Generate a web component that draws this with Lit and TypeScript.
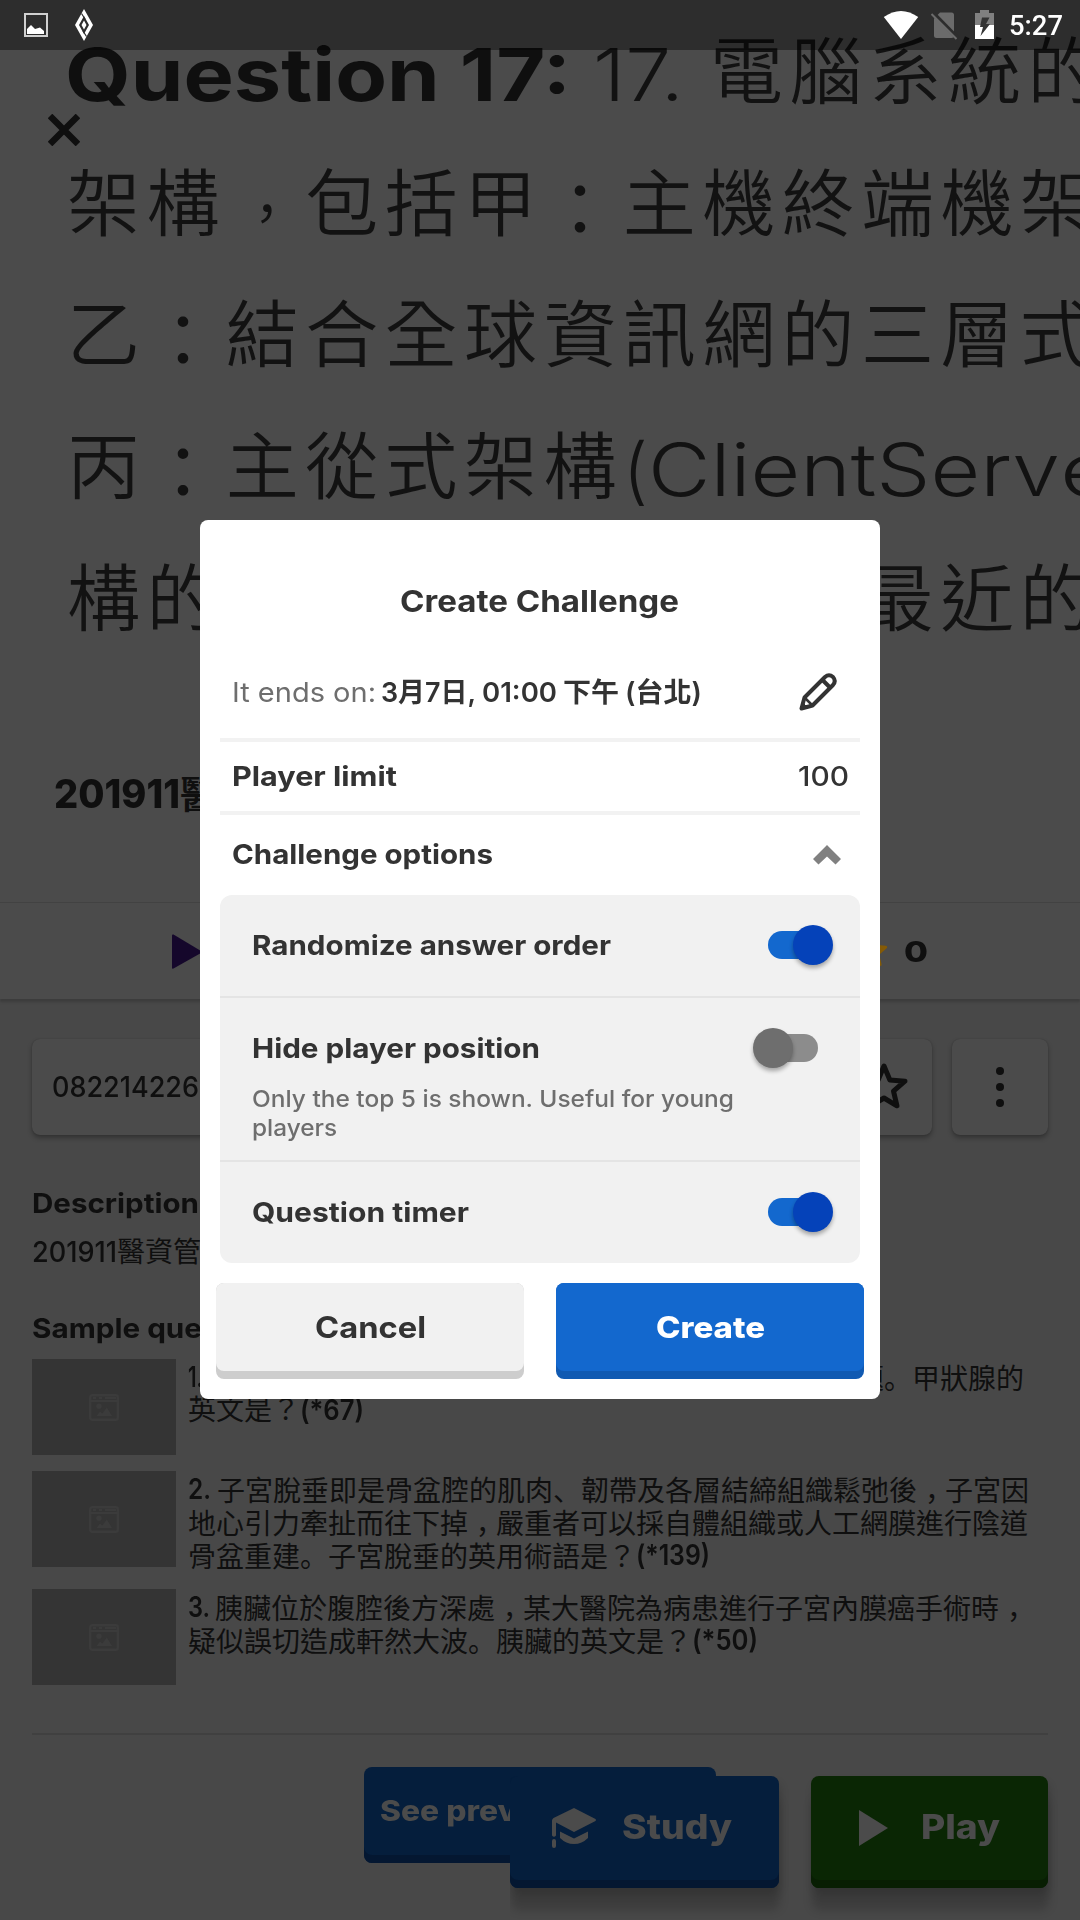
import { LitElement, html, css, svg } from "lit";
import { customElement, property, state } from "lit/decorators.js";
import { classMap } from "lit/directives/class-map.js";

/** A single line of text stretched or squeezed to a given advance width. */
@customElement("fit-text")
class FitText extends LitElement {
  static styles = css`
    :host {
      display: inline-block;
      white-space: pre;
      flex: none;
      text-align: left;
    }
    .run {
      display: inline-block;
      transform-origin: 0 50%;
    }
  `;
  @property({ type: Number }) w = 0;
  @state() private scale = 1;

  firstUpdated() {
    const run = this.renderRoot.querySelector(".run") as HTMLElement;
    const natural = run.getBoundingClientRect().width;
    if (natural > 0 && this.w > 0) this.scale = this.w / natural;
  }

  render() {
    this.style.width = `${this.w}px`;
    return html`<span class="run" style="transform: scaleX(${this.scale})"><slot></slot></span>`;
  }
}

@customElement("toggle-switch")
class ToggleSwitch extends LitElement {
  static styles = css`
    :host {
      display: block;
      flex: none;
      margin-right: 27px;
    }
    :host([off]) {
      margin-right: 42px;
    }
    .switch {
      width: 65px;
      height: 40px;
      display: flex;
      align-items: center;
    }
    .track {
      flex: 1;
      height: 28px;
      background: #1368ce;
      border-radius: 14px 0 0 14px;
      margin-right: -20px;
    }
    .thumb {
      width: 40px;
      height: 40px;
      border-radius: 50%;
      background: #0542b9;
      box-shadow: 0 3px 4px rgba(0, 0, 0, 0.32);
      z-index: 1;
    }
    .off {
      flex-direction: row-reverse;
    }
    .off .track {
      background: #8c8c8c;
      border-radius: 0 14px 14px 0;
      margin: 0 0 0 -20px;
    }
    .off .thumb {
      background: #6e6e6e;
    }
  `;
  @property({ type: Boolean, reflect: true }) off = false;

  render() {
    return html`<div class=${classMap({ switch: true, off: this.off })}>
      <div class="track"></div>
      <div class="thumb"></div>
    </div>`;
  }
}

const starPath = (cx: number, cy: number, r: number, inner: number) =>
  Array.from({ length: 10 }, (_, i) => {
    const a = (Math.PI / 5) * i - Math.PI / 2;
    const d = i % 2 ? inner : r;
    return `${i ? "L" : "M"}${(cx + d * Math.cos(a)).toFixed(2)} ${(cy + d * Math.sin(a)).toFixed(2)}`;
  }).join("") + "Z";

/** Chinese text whose stops and commas sit low in their cells. */
const han = (text: string) =>
  html`<span class="han">${text
      .split(/([。、，：])/)
      .filter(Boolean)
      .map((part) =>
        part === "。" || part === "、"
          ? html`<i class="stop">${part}</i>`
          : part === "，"
            ? html`<i class="comma">${part}</i>`
            : part === "："
              ? html`<i class="colon">${part}</i>`
              : part
      )}</span>`;

const thumbIcon = svg`<svg width="30" height="27" viewBox="0 0 30 27">
  <rect x="1.2" y="1.2" width="27.6" height="24.6" rx="2" fill="none" stroke="#3b3b3b" stroke-width="2.4"/>
  <path d="M1 7H29" stroke="#3b3b3b" stroke-width="2.4"/>
  <path d="M4 4H7M10 4H13M16 4H27" stroke="#3b3b3b" stroke-width="2.2"/>
  <circle cx="10" cy="12.3" r="2.7" fill="#3b3b3b"/>
  <path d="M7.5 22L11 17.5L13.3 19.5L17.8 13.5L23 22Z" fill="#3b3b3b"/>
</svg>`;

interface Sample {
  lines: unknown[];
}

const samples: Sample[] = [
  {
    lines: [
      html`<div class="line apart"><fit-text w="15">1.</fit-text>${han("題。甲狀腺的")}</div>`,
      html`<div class="line">${han("英文是？")}<fit-text w="64">(*67)</fit-text></div>`,
    ],
  },
  {
    lines: [
      html`<div class="line"><fit-text class="gap2" w="23">2.</fit-text>${han("子宮脫垂即是骨盆腔的肌肉、韌帶及各層結締組織鬆弛後，子宮因")}</div>`,
      html`<div class="line">${han("地心引力牽扯而往下掉，嚴重者可以採自體組織或人工網膜進行陰道")}</div>`,
      html`<div class="line">${han("骨盆重建。子宮脫垂的英用術語是？")}<fit-text w="74">(*139)</fit-text></div>`,
    ],
  },
  {
    lines: [
      html`<div class="line"><fit-text class="gap3" w="22">3.</fit-text>${han("胰臟位於腹腔後方深處，某大醫院為病患進行子宮內膜癌手術時，")}</div>`,
      html`<div class="line">${han("疑似誤切造成軒然大波。胰臟的英文是？")}<fit-text w="66">(*50)</fit-text></div>`,
    ],
  },
];

@customElement("app-root")
class AppRoot extends LitElement {
  static styles = css`
    :host {
      display: block;
      width: 1080px;
      height: 1920px;
      font-family: Inter, "Noto Sans CJK TC", sans-serif;
      font-size: 27px;
      color: #0f0f0f;
    }
    svg {
      display: block;
      flex: none;
    }
    .screen {
      position: relative;
      width: 1080px;
      height: 1920px;
      overflow: hidden;
      background: #484848;
      display: flex;
      flex-direction: column;
    }
    .stop,
    .comma {
      font-style: normal;
      font-family: "Noto Sans CJK JP", sans-serif;
    }
    .comma,
    .colon {
      font-style: normal;
      position: relative;
    }
    .comma {
      left: 0.28em;
    }
    .colon {
      top: 0.08em;
    }
    .hero {
      height: 902px;
      background: #4b4b4b;
      box-sizing: border-box;
      padding-top: 6px;
    }
    .picture {
      font-size: 73px;
      font-weight: 350;
      color: #121212;
      filter: blur(0.7px);
    }
    .row {
      display: flex;
      white-space: nowrap;
      height: 131.7px;
      line-height: 131.7px;
      padding-left: 67px;
    }
    .row .han {
      letter-spacing: 6.4px;
      flex: none;
    }
    .row .comma {
      font-size: 56px;
      letter-spacing: 23.4px;
      left: 0.5em;
      top: -0.22em;
    }
    .row fit-text {
      padding-top: 3px;
    }
    .row.first {
      padding-left: 65px;
    }
    .row .strong {
      font-weight: 700;
      color: #0f0f0f;
      margin-right: 22px;
    }
    .row .num {
      margin-right: 26px;
    }
    .row.split {
      justify-content: space-between;
      width: 1035px;
    }
    .row.split .han:last-child {
      width: 241px;
    }
    .close {
      position: absolute;
      left: 48px;
      top: 114px;
    }
    .title {
      margin-top: 100px;
      height: 60px;
      line-height: 60px;
      padding-left: 54px;
      font-size: 39px;
      font-weight: 800;
      display: flex;
    }
    .title .han {
      font-size: 38px;
      font-weight: 700;
    }
    .stats {
      height: 97px;
      box-sizing: border-box;
      border-top: 1px solid #424242;
      background: #4b4b4b;
      box-shadow: 0 3px 2px #3c3c3c;
      display: flex;
      align-items: center;
      justify-content: space-between;
      padding: 1px 152px 0 172px;
    }
    .likes {
      display: flex;
      align-items: center;
      gap: 16px;
      font-size: 29px;
      font-weight: 800;
    }
    .details {
      flex: 1;
      display: flex;
      flex-direction: column;
      padding: 40px 32px 0;
    }
    .cards {
      display: flex;
      gap: 20px;
      height: 96px;
    }
    .card {
      width: 96px;
      border-radius: 8px;
      background: #4b4b4b;
      box-shadow: 0 3px 5px rgba(0, 0, 0, 0.3), 0 0 1px rgba(0, 0, 0, 0.25);
      display: flex;
      align-items: center;
      justify-content: center;
    }
    .card.code {
      flex: 1;
      justify-content: flex-start;
      padding-left: 20px;
      font-size: 28px;
      font-weight: 500;
    }
    .h {
      font-weight: 700;
      font-size: 27.5px;
      height: 34px;
      line-height: 34px;
      margin-top: 51px;
    }
    .desc {
      display: flex;
      margin-top: 15px;
      height: 34px;
      line-height: 34px;
      font-size: 28px;
      font-weight: 500;
    }
    .desc .han {
      font-weight: 400;
    }
    .h.second {
      margin-top: 42px;
    }
    .list {
      display: flex;
      flex-direction: column;
      gap: 16px;
      margin-top: 14px;
    }
    .sample {
      display: flex;
      gap: 12px;
      min-height: 96px;
      align-items: flex-start;
    }
    .pic {
      width: 144px;
      height: 96px;
      background: #343434;
      display: flex;
      align-items: center;
      justify-content: center;
    }
    .lines {
      flex: 1;
      padding: 2px 0 1px;
      font-size: 28px;
      font-weight: 600;
    }
    .line {
      display: flex;
      height: 33px;
      line-height: 33px;
      white-space: nowrap;
    }
    .line .han {
      font-weight: 400;
    }
    .line.apart {
      justify-content: space-between;
      width: 836px;
    }
    .gap2 {
      margin-right: 6px;
    }
    .gap3 {
      margin-right: 5px;
    }
    .rule {
      height: 2px;
      background: #404040;
      margin-top: 48px;
    }
    .btn {
      box-sizing: border-box;
      border-radius: 8px;
      display: flex;
      align-items: center;
      font-weight: 800;
      color: #4b4b4b;
      padding-bottom: 8px;
    }
    .btn.dark {
      background: #051e3c;
      box-shadow: inset 0 -8px 0 #041731;
    }
    .btn.prev {
      width: 352px;
      height: 96px;
      margin: 32px auto 0;
      padding-left: 16px;
      font-size: 28px;
    }
    .bar {
      position: absolute;
      right: 32px;
      bottom: 32px;
      display: flex;
      gap: 32px;
      font-size: 34px;
    }
    .bar .btn {
      height: 112px;
      padding-bottom: 9px;
    }
    .bar fit-text {
      margin-top: -2px;
    }
    .bar .study {
      width: 269px;
      padding-left: 42px;
      gap: 25px;
      box-shadow: inset 0 -8px 0 #041731, 1px 22px 10px rgba(0, 0, 0, 0.17),
        2px 6px 8px rgba(0, 0, 0, 0.14);
      clip-path: inset(0 -20px -40px 0);
    }
    .bar .play {
      width: 237px;
      padding-left: 48px;
      gap: 33px;
      background: #0a2604;
      box-shadow: inset 0 -8px 0 #081e03, 1px 22px 10px rgba(0, 0, 0, 0.17),
        2px 6px 8px rgba(0, 0, 0, 0.14);
    }
    .status {
      position: absolute;
      inset: 0 0 auto 0;
      height: 50px;
      background: rgba(0, 0, 0, 0.4);
      display: flex;
      align-items: center;
      justify-content: space-between;
      padding: 0 17px 0 24px;
      color: #fff;
      font: 500 28px/50px Roboto, sans-serif;
    }
    .status fit-text {
      padding-top: 2px;
    }
    .group {
      display: flex;
      align-items: center;
      height: 50px;
    }
    .overlay {
      position: absolute;
      inset: 0;
      z-index: 5;
      display: flex;
      align-items: flex-start;
      justify-content: center;
      padding-top: 520px;
    }
    .modal {
      width: 680px;
      height: 879px;
      box-sizing: border-box;
      background: #fff;
      border-radius: 8px;
      color: #333;
      font-weight: 700;
      font-size: 27.5px;
      line-height: 40px;
    }
    .head {
      padding: 61px 0 24px 200px;
      height: 41px;
      line-height: 41px;
      font-size: 30px;
    }
    .item {
      margin: 0 20px;
      padding: 0 13px 0 12px;
      display: flex;
      align-items: center;
      justify-content: space-between;
      border-bottom: 4px solid #f2f2f2;
    }
    .ends {
      height: 92px;
      padding-right: 23px;
    }
    .when {
      display: flex;
      font-weight: 600;
    }
    .when .dim {
      color: #6e6e6e;
      font-weight: 400;
      margin-right: 5px;
    }
    .when .t {
      margin-left: 6px;
    }
    .limit {
      height: 69px;
      padding-right: 11px;
    }
    .limit fit-text {
      padding-bottom: 1px;
    }
    .limit .val {
      font-weight: 500;
    }
    .opts {
      height: 80px;
      border: 0;
      padding-right: 19px;
    }
    .opts fit-text {
      padding-bottom: 2px;
    }
    .panel {
      margin: 0 20px;
      background: #f1f1f1;
      border-radius: 12px;
    }
    .opt {
      padding-left: 32px;
      box-sizing: border-box;
      height: 101px;
      display: flex;
      align-items: center;
      justify-content: space-between;
      padding-bottom: 1px;
    }
    .opt.short {
      height: 100px;
      padding-bottom: 0;
    }
    .mid {
      border: solid #e4e4e4;
      border-width: 2px 0;
      height: 162px;
    }
    .hint {
      margin-top: -14px;
      padding-left: 32px;
      font-size: 23.5px;
      font-weight: 500;
      color: #6e6e6e;
      line-height: 29px;
      display: flex;
      flex-direction: column;
    }
    .actions {
      display: flex;
      gap: 32px;
      margin: 20px 16px 0;
    }
    .action {
      width: 308px;
      height: 96px;
      font-size: 29.5px;
      color: #333;
      background: #cdcdcd;
      font-weight: 700;
    }
    .face {
      width: 308px;
      height: 88px;
      border-radius: 8px;
      background: #f1f1f1;
      display: flex;
      align-items: center;
      justify-content: center;
    }
    .action.primary {
      background: #105ab2;
      color: #fff;
      font-weight: 800;
    }
    .primary .face {
      background: #1368ce;
    }
  `;

  private statusBar() {
    return html`<div class="status">
      <div class="group">
        <svg width="70" height="50" viewBox="24 0 70 50">
          <rect x="25" y="14" width="22" height="22" fill="none" stroke="#d0d0d0" stroke-width="2" />
          <path d="M27 34V29L31 25L35 29L40 27.5L44 31V34Z" fill="#fff" />
          <path
            fill-rule="evenodd"
            d="M84 9L93 25L84 41L75 25ZM84 16L79 25L84 34L89 25ZM84 20.500L86.500 25L84 29.500L81.500 25Z"
            fill="#fff"
          />
          <path d="M81.500 13.500L85 19M86.500 36.500L83 31" stroke="#2d2d2d" stroke-width="1.200" />
        </svg>
      </div>
      <div class="group">
        <svg width="126" height="50" viewBox="884 0 126 50">
          <path d="M902 39L884.800 17Q902 5 919.200 17Z" fill="#fff" />
          <path d="M941 12.500H952.500Q955 12.500 955 15V35.500Q955 38 952.500 38H937.500Q935 38 935 35.500V18.500Z" fill="#6b6b6b" />
          <path d="M934.500 13.500L959 38.500" stroke="#2d2d2d" stroke-width="4" />
          <path d="M932.500 14L957.500 39" stroke="#6b6b6b" stroke-width="2" />
          <path d="M976 13H981V10H990V13H995V25H976Z" fill="#808080" />
          <path d="M976 25H995V39H976Z" fill="#fff" />
          <path d="M983 17.500H990.500L987 24H991L981.500 36L984 27H981Z" fill="#333" />
        </svg>
        <fit-text w="54">5:27</fit-text>
      </div>
    </div>`;
  }

  private page() {
    return html`
      <div class="hero">
        <div class="picture">
          <div class="row first">
            <fit-text class="strong" w="506">Question 17:</fit-text>
            <fit-text class="num" w="91">17.</fit-text>
            ${han("電腦系統的")}
          </div>
          <div class="row">${han("架構，包括甲：主機終端機架")}</div>
          <div class="row">${han("乙：結合全球資訊網的三層式")}</div>
          <div class="row">
            ${han("丙：主從式架構")}<fit-text w="25">(</fit-text><fit-text w="412">ClientServ</fit-text><fit-text w="88">er</fit-text>
          </div>
          <div class="row split">${han("構的")}${han("最近的")}</div>
        </div>
        <div class="title"><fit-text w="126">201911</fit-text>${han("醫")}</div>
      </div>
      <div class="stats">
        <svg width="30" height="36" viewBox="0 0 30 36"><path d="M0 1.500Q0 0 1.500 .5L29 17Q30 18 29 19L1.500 34.500Q0 35 0 34Z" fill="#15072b" /></svg>
        <div class="likes">
          <svg width="34" height="36" viewBox="0 0 34 36">
            <path d=${starPath(17, 18, 15.5, 7)} fill="#845a06" stroke="#845a06" stroke-width="3" stroke-linejoin="round" />
          </svg>
          <fit-text w="24">0</fit-text>
        </div>
      </div>
      <div class="details">
        <div class="cards">
          <div class="card code"><fit-text w="147">082214226</fit-text></div>
          <div class="card">
            <svg width="56" height="56" viewBox="0 0 56 56">
              <path d=${starPath(28, 29, 22, 10)} fill="none" stroke="#0f0f0f" stroke-width="5" stroke-linejoin="round" />
            </svg>
          </div>
          <div class="card">
            <svg width="8" height="40" viewBox="0 0 8 40">
              <circle cx="4" cy="4" r="4" fill="#0f0f0f" />
              <circle cx="4" cy="20" r="4" fill="#0f0f0f" />
              <circle cx="4" cy="36" r="4" fill="#0f0f0f" />
            </svg>
          </div>
        </div>
        <div class="h"><fit-text w="167">Description</fit-text></div>
        <div class="desc"><fit-text w="85">201911</fit-text>${han("醫資管")}</div>
        <div class="h second"><fit-text w="170">Sample que</fit-text></div>
        <div class="list">
          ${samples.map(
            (s) => html`<div class="sample">
              <div class="pic">${thumbIcon}</div>
              <div class="lines">${s.lines}</div>
            </div>`
          )}
        </div>
        <div class="rule"></div>
        <div class="btn dark prev"><fit-text w="137">See prev</fit-text></div>
      </div>
      <div class="bar">
        <div class="btn dark study">
          <svg width="45" height="42" viewBox="0 0 45 42">
            <path d="M22 1L43.500 12Q44.500 13 43.500 14L22 25L4 15.500V28.500Q2 31 0 28.500V13.500Q0 12 1.500 11Z" fill="#4b4b4b" />
            <path d="M8 24.500L22 31.500L36 24.500V31Q30 37 22 37Q14 37 8 31Z" fill="#4b4b4b" />
            <rect x="0" y="32" width="4" height="9" rx="2" fill="#4b4b4b" />
          </svg>
          <fit-text w="110">Study</fit-text>
        </div>
        <div class="btn play">
          <svg width="29" height="36" viewBox="0 0 29 36"><path d="M0 0L29 18L0 36Z" fill="#4b4b4b" /></svg>
          <fit-text w="79">Play</fit-text>
        </div>
      </div>
      <svg class="close" width="32" height="32" viewBox="0 0 32 32">
        <path d="M2 2L30 30M30 2L2 30" stroke="#0f0f0f" stroke-width="6.500" />
      </svg>
    `;
  }

  private modal() {
    return html`<div class="overlay">
      <div class="modal">
        <div class="head"><fit-text w="279">Create Challenge</fit-text></div>
        <div class="item ends">
          <div class="when">
            <fit-text class="dim" w="144">It ends on:</fit-text>
            <fit-text w="95">3月7日,</fit-text>
            <fit-text class="t" w="75">01:00</fit-text>
            <fit-text class="t" w="56">下午</fit-text>
            <fit-text class="t" w="77">(台北)</fit-text>
          </div>
          <svg width="38" height="38" viewBox="0 0 38 38" fill="none" stroke="#333" stroke-width="4" stroke-linejoin="round">
            <path d="M2.500 35.500L5.500 24.500L26 4Q30 .5 34 4Q37.500 8 34 12L13.500 32.500Z" />
            <path d="M23.500 7L31 14.500" />
            <path d="M6 25L13 32" stroke-width="2.500" />
            <path d="M2.500 35.500L4 30L8 34Z" fill="#333" stroke-width="1" />
          </svg>
        </div>
        <div class="item limit">
          <fit-text w="165">Player limit</fit-text>
          <fit-text class="val" w="51">100</fit-text>
        </div>
        <div class="item opts">
          <fit-text w="261">Challenge options</fit-text>
          <svg width="28" height="20" viewBox="0 0 28 20"><path d="M14 0L28 14L22.500 19.500L14 11.500L5.500 19.500L0 14Z" fill="#808080" /></svg>
        </div>
        <div class="panel">
          <div class="opt">
            <fit-text w="359">Randomize answer order</fit-text>
            <toggle-switch></toggle-switch>
          </div>
          <div class="mid">
            <div class="opt short">
              <fit-text w="288">Hide player position</fit-text>
              <toggle-switch off></toggle-switch>
            </div>
            <div class="hint">
              <fit-text w="482">Only the top 5 is shown. Useful for young</fit-text>
              <fit-text w="85">players</fit-text>
            </div>
          </div>
          <div class="opt">
            <fit-text w="217">Question timer</fit-text>
            <toggle-switch></toggle-switch>
          </div>
        </div>
        <div class="actions">
          <div class="btn action"><div class="face"><fit-text w="111">Cancel</fit-text></div></div>
          <div class="btn action primary"><div class="face"><fit-text w="109">Create</fit-text></div></div>
        </div>
      </div>
    </div>`;
  }

  render() {
    return html`<div class="screen">${this.page()} ${this.statusBar()} ${this.modal()}</div>`;
  }
}
